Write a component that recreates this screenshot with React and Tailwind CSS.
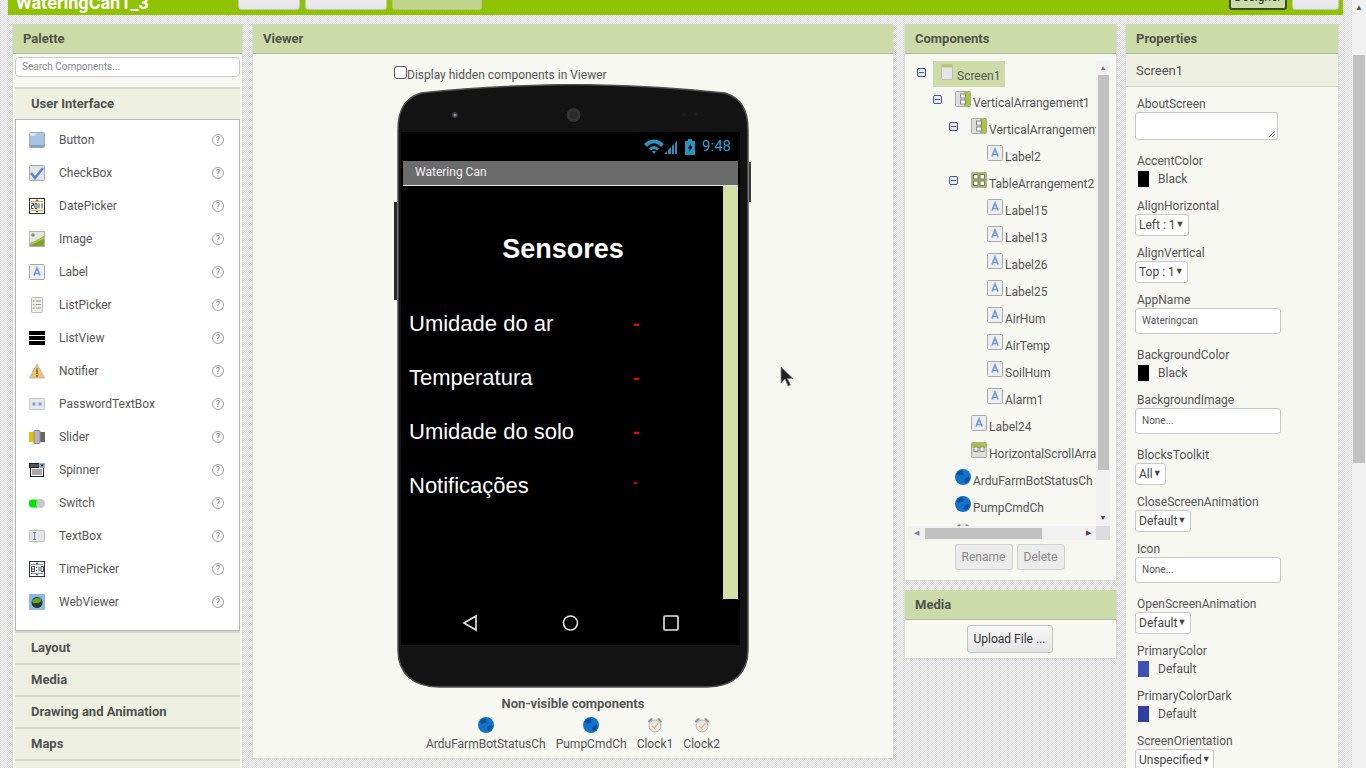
import React from "react";

const paletteItems = [
  ["Button", "button"],
  ["CheckBox", "checkbox"],
  ["DatePicker", "datepicker"],
  ["Image", "image"],
  ["Label", "label"],
  ["ListPicker", "listpicker"],
  ["ListView", "listview"],
  ["Notifier", "notifier"],
  ["PasswordTextBox", "password"],
  ["Slider", "slider"],
  ["Spinner", "spinner"],
  ["Switch", "switch"],
  ["TextBox", "textbox"],
  ["TimePicker", "timepicker"],
  ["WebViewer", "webviewer"],
];

const tree = {
  name: "Screen1", icon: "screen", selected: true, kids: [
    {
      name: "VerticalArrangement1", icon: "vertical", kids: [
        { name: "VerticalArrangement2", icon: "vertical", kids: [{ name: "Label2", icon: "label" }] },
        {
          name: "TableArrangement2", icon: "table", kids: [
            { name: "Label15", icon: "label" },
            { name: "Label13", icon: "label" },
            { name: "Label26", icon: "label" },
            { name: "Label25", icon: "label" },
            { name: "AirHum", icon: "label" },
            { name: "AirTemp", icon: "label" },
            { name: "SoilHum", icon: "label" },
            { name: "Alarm1", icon: "label" },
          ],
        },
        { name: "Label24", icon: "label" },
        { name: "HorizontalScrollArrangement1", icon: "horizontal" },
      ],
    },
    { name: "ArduFarmBotStatusCh", icon: "globe" },
    { name: "PumpCmdCh", icon: "globe" },
    { name: "Clock1", icon: "clock" },
  ],
};

// little component icons, all drawn on a 16 x 16 box
function Icon({ name }) {
  const frame = "#a9a9a9";
  return (
    <svg width="16" height="16" viewBox="0 0 16 16" className="shrink-0">
      {name === "button" && (
        <>
          <rect x="0.5" y="0.5" width="15" height="15" rx="1" fill="#a9c2e6" stroke="#a8a8a8" />
          <rect x="1" y="13" width="14" height="2" fill="#7f9fcf" />
          <path d="M1 1h8L5 4H1z" fill="#d6e3f5" />
        </>
      )}
      {name === "checkbox" && (
        <>
          <rect x="0.5" y="0.5" width="15" height="15" rx="1" fill="#e4e4e4" stroke={frame} />
          <path d="M2 8l4 5 8-10" fill="none" stroke="#4f86d6" strokeWidth="2.4" />
        </>
      )}
      {(name === "datepicker" || name === "timepicker") && (
        <>
          <rect x="0.5" y="0.5" width="15" height="15" fill="#fff" stroke="#333" />
          <path d="M2 3.5h12M2 12.5h12" stroke={name === "datepicker" ? "#f0a030" : "#6a9fd8"} />
          <path d="M8 1l-1.5 2h3zM8 15l-1.5-2h3z" fill="#555" />
          <path d={name === "datepicker" ? "M2.5 5.5h2v2h-2v3h2M6 5.5h2v5H6zM10 5.5v5M13 5.5v5" : "M2.5 5.5h3v5h-3zM2.5 8h3M7.5 6v1M7.5 9v1M10 5.5v5M12 5.5h2.5v5H12z"} fill="none" stroke="#333" strokeWidth="0.9" />
        </>
      )}
      {name === "image" && (
        <>
          <rect x="0.5" y="0.5" width="15" height="15" fill="#e4ead8" stroke="#b5b5b5" />
          <circle cx="4" cy="4" r="1.8" fill="#8a8a8a" />
          <path d="M1 12c4-1 7-3 14-7v10H1z" fill="#7ba428" />
          <path d="M1 12c4-1 7-3 14-7v3c-6 2-9 5-14 6z" fill="#a6c85a" />
        </>
      )}
      {name === "label" && (
        <>
          <rect x="0.5" y="0.5" width="15" height="15" rx="1" fill="#eeeeee" stroke={frame} />
          <path d="M5 11.5L8 4l3 7.5M6 9.5h4" fill="none" stroke="#6f9bd8" strokeWidth="1.6" />
        </>
      )}
      {name === "listpicker" && (
        <>
          <rect x="2.5" y="0.5" width="11" height="15" rx="1" fill="#eeeeee" stroke="#bbb" />
          <path d="M4 4h1.5M4 7.5h1.5M4 11h1.5" stroke="#9fbf3f" strokeWidth="1.5" />
          <path d="M7 4h5M7 7.5h5M7 11h5" stroke="#999" />
        </>
      )}
      {name === "listview" && <path d="M0 1h16v4H0zM0 6h16v4H0zM0 11h16v4H0z" fill="#000" />}
      {name === "notifier" && (
        <>
          <path d="M8 1l7.5 14H.5z" fill="#f2c26a" stroke="#b9b9b9" />
          <path d="M8 5.5v5.5M8 12v2" stroke="#8a6a30" strokeWidth="1.5" />
        </>
      )}
      {name === "password" && (
        <>
          <rect x="0.5" y="2.5" width="15" height="11" rx="1" fill="#e8e8e8" stroke="#c4c4c4" />
          <path d="M5 6v4M3.3 7l3.4 2M6.7 7L3.3 9M11 6v4M9.300 7l3.400 2M12.700 7l-3.400 2" stroke="#6f9bd8" />
        </>
      )}
      {name === "slider" && (
        <>
          <rect x="0" y="3" width="5" height="10" fill="#f5b800" />
          <rect x="10" y="3" width="6" height="10" fill="#666" />
          <rect x="5" y="1.5" width="6" height="13" rx="1" fill="#b5b5b5" stroke="#8a8a8a" />
        </>
      )}
      {name === "spinner" && (
        <>
          <rect x="1.5" y="4.5" width="13" height="10" fill="#fff" stroke="#222" />
          <rect x="0.5" y="1.5" width="15" height="4" fill="#555" stroke="#222" />
          <rect x="10" y="1" width="6" height="5" fill="#8fb2e0" />
          <path d="M11.5 2.5h3L13 5z" fill="#000" />
          <path d="M3 8h10M3 10h10M3 12h10" stroke="#555" />
        </>
      )}
      {name === "switch" && (
        <>
          <rect x="0" y="4.500" width="11" height="8" rx="3" fill="#00e800" />
          <circle cx="11.500" cy="8.500" r="4.500" fill="#c8c8c8" />
        </>
      )}
      {name === "textbox" && (
        <>
          <rect x="0.5" y="2.5" width="15" height="11" rx="1" fill="#e4e4e4" stroke="#c0c0c0" />
          <path d="M4 4.500h3M4 11.500h3M5.500 4.500v7" fill="none" stroke="#6f8fb8" />
        </>
      )}
      {name === "webviewer" && (
        <>
          <rect x="0" y="0" width="16" height="16" rx="1" fill="#8fb6e6" />
          <circle cx="8" cy="8.500" r="5.500" fill="#1f3f2a" />
          <path d="M3 7c2-3 6-4 9-2 1 2-1 4-4 4S4 10 3 7z" fill="#6aa52a" />
        </>
      )}
      {name === "screen" && (
        <>
          <rect x="2.5" y="0.5" width="11" height="15" rx="1.5" fill="#e6e6e6" stroke="#bdbdbd" />
          <rect x="3" y="1" width="10" height="2.5" fill="#b5cc5a" />
        </>
      )}
      {name === "vertical" && (
        <>
          <rect x="0.5" y="0.5" width="15" height="15" rx="1" fill="#dedede" stroke={frame} />
          <rect x="9" y="1" width="6" height="14" fill="#a8c63c" />
          <rect x="5.5" y="3" width="5" height="4" fill="#fff" stroke="#888" />
          <rect x="5.5" y="9" width="5" height="4" fill="#fff" stroke="#888" />
        </>
      )}
      {name === "table" && (
        <>
          <rect x="0.5" y="0.5" width="15" height="15" rx="1" fill="#a8c63c" stroke={frame} />
          <rect x="2.5" y="2.5" width="4.5" height="4.5" fill="#fff" stroke="#777" />
          <rect x="9" y="2.5" width="4.5" height="4.5" fill="#fff" stroke="#777" />
          <rect x="2.5" y="9" width="4.5" height="4.5" fill="#fff" stroke="#777" />
          <rect x="9" y="9" width="4.5" height="4.5" fill="#fff" stroke="#777" />
        </>
      )}
      {name === "horizontal" && (
        <>
          <rect x="0.5" y="0.5" width="15" height="15" rx="1" fill="#dedede" stroke={frame} />
          <rect x="1" y="1" width="14" height="5" fill="#a8c63c" />
          <rect x="3" y="5" width="4" height="4.5" fill="#fff" stroke="#888" />
          <rect x="9" y="5" width="4" height="4.5" fill="#fff" stroke="#888" />
        </>
      )}
      {name === "globe" && (
        <>
          <circle cx="8" cy="8" r="8" fill="#1273cc" />
          <path d="M2 4c2-2 4-3 6-3-1 2 0 3 1 4-2 2-4 0-5 2-1-1-2-2-2-3zM10 9c2-1 4-1 5 0-1 3-3 5-5 5-1-2-1-3 0-5z" fill="#0b4f96" />
        </>
      )}
      {name === "clock" && (
        <>
          <path d="M1 4l3-3 2 1-4 4zM15 4l-3-3-2 1 4 4z" fill="#8d8d8d" />
          <circle cx="8" cy="9" r="6" fill="#e8e8e8" stroke="#b8b8b8" />
          <path d="M5 9l2.5 2L11 6.5" fill="none" stroke="#f2b35c" strokeWidth="1.3" />
        </>
      )}
    </svg>
  );
}

function PanelHeader({ title }) {
  return (
    <div className="h-[30px] shrink-0 bg-[#cddba8] border-b border-[#b4b8a8] pl-[10px] text-[13px] leading-[29px] font-bold text-[#4f524c]">
      {title}
    </div>
  );
}

function Drawer({ title }) {
  return (
    <div className="h-[32px] shrink-0 bg-[#eef1e2] border-t-2 border-[#d4d6cc] pl-4 text-[13px] leading-[30px] font-bold text-[#4f524c]">
      {title}
    </div>
  );
}

function PaletteRow({ label, icon }) {
  return (
    <div className="h-[33px] flex items-center pl-[13px] pr-[15px]">
      <Icon name={icon} />
      <span className="ml-[14px] flex-1">{label}</span>
      <span className="w-3 h-3 rounded-full border border-[#a0a0a0] text-[9px] leading-[10px] text-center text-[#777]">?</span>
    </div>
  );
}

function TreeNode({ node }) {
  return (
    <div>
      <div className="flex h-[27px] items-start whitespace-nowrap">
        <div className="w-4 shrink-0 pt-[7px]">
          {node.kids && (
            <div className="w-[9px] h-[9px] rounded-[2px] border border-[#3f51b5] bg-[#e8edf7] flex items-center justify-center">
              <div className="w-[5px] h-px bg-[#3f51b5]" />
            </div>
          )}
        </div>
        <div className={node.selected ? "flex h-[26px] pl-[6px] pr-[5px] bg-[#cddba8]" : "flex h-[26px] pl-[6px] pr-[5px]"}>
          <div className="pt-[3px]"><Icon name={node.icon} /></div>
          <span className="ml-[2px] mt-[7px] leading-4">{node.name}</span>
        </div>
      </div>
      {node.kids && (
        <div className="pl-4">
          {node.kids.map((k) => <TreeNode key={k.name} node={k} />)}
        </div>
      )}
    </div>
  );
}

function Btn({ children, className = "" }) {
  return (
    <div className={"rounded-[3px] border border-[#c4c4c4] bg-gradient-to-b from-[#f8f8f8] to-[#e4e4e4] text-center text-[#333] whitespace-nowrap " + className}>
      {children}
    </div>
  );
}

function PropLabel({ children }) {
  return <div className="pt-px pl-[2px] leading-4">{children}</div>;
}

function ColorProp({ label, color, value }) {
  return (
    <div className="mb-[10px]">
      <PropLabel>{label}</PropLabel>
      <div className="mt-[2px] h-4 flex items-center pl-[3px]">
        <div className={"w-[11px] h-4 " + color} />
        <span className="ml-[9px]">{value}</span>
      </div>
    </div>
  );
}

function SelectProp({ label, value, width }) {
  return (
    <div className="mb-2">
      <PropLabel>{label}</PropLabel>
      <div className={"h-[22px] rounded-[3px] border border-[#c8c8c8] bg-white flex items-center justify-between pl-[3px] pr-[4px] whitespace-nowrap text-[#444] " + width}>
        <span>{value}</span>
        <span className="text-[9px]">▼</span>
      </div>
    </div>
  );
}

function InputProp({ label, value }) {
  return (
    <div className="mb-3">
      <PropLabel>{label}</PropLabel>
      <div className="h-[26px] w-[146px] rounded-[3px] border border-[#c8c8c8] bg-white pl-[6px] text-[10px] leading-6 text-[#555]">
        {value}
      </div>
    </div>
  );
}

function PhoneFrame() {
  return (
    <svg width="352" height="604" viewBox="0 0 352 604" className="absolute inset-0">
      <path
        d="M1 46C1 24 9 14 24 9C80 3 130 1 176 .5C222 1 272 3 328 9C343 14 351 24 351 46V566C351 590 335 603 310 603H42C17 603 1 590 1 566Z"
        fill="#131313"
        stroke="#505050"
        strokeWidth="1.5"
      />
      <circle cx="58" cy="31" r="3" fill="#3a3a44" />
      <circle cx="58" cy="31" r="1.5" fill="#8d8da6" />
      <circle cx="176.5" cy="31" r="7" fill="#333" />
      <circle cx="176.5" cy="31" r="4" fill="#2a2a2a" />
      <circle cx="287" cy="30" r="2.5" fill="#1d1d1d" />
      <circle cx="299" cy="30" r="1.5" fill="#1d1d1d" />
    </svg>
  );
}

function SensorRow({ label, small }) {
  return (
    <div className="h-[54px] flex items-center pl-[6px] text-[22px] text-white font-['Liberation_Sans',Arial,sans-serif]">
      <span className="w-[224px]">{label}</span>
      <span className={small ? "text-[13px] font-bold text-[#ff0000] -mt-1" : "text-[19px] font-bold text-[#ff0000] mt-[3px]"}>-</span>
    </div>
  );
}

function NonVisible({ label, icon }) {
  return (
    <div className="flex flex-col items-center">
      <Icon name={icon} />
      <span className="mt-[3px] leading-4">{label}</span>
    </div>
  );
}

export default function App() {
  return (
    <div className="flex w-[1366px] h-screen overflow-hidden font-[Roboto,sans-serif] text-[13px] text-[#555] bg-[repeating-conic-gradient(#dcdcdc_0_25%,#f6f6f6_0_50%)] bg-[length:2px_2px]">
      <div className="w-[1352px] shrink-0">
        {/* top bar, page is scrolled so most of it is cut off */}
        <div className="ml-2 w-[1335px] h-[15px] overflow-hidden bg-[#8fc202] flex items-end pb-[5px] text-[12px]">
          <div className="ml-2 w-[222px] text-[18px] leading-6 font-bold text-white -mb-[5px]">WateringCan1_3</div>
          <Btn className="w-[62px] h-6 shrink-0">Screen1 ▾</Btn>
          <Btn className="ml-[5px] w-[82px] h-6 shrink-0">Add Screen ...</Btn>
          <div className="ml-[5px] w-[90px] h-6 shrink-0 rounded-[3px] bg-[#c0d48c] border border-[#b4c884] text-center text-[#778] whitespace-nowrap">Remove Screen</div>
          <div className="flex-1" />
          <div className="w-[58px] h-6 shrink-0 rounded-[3px] bg-[#cddba8] border-2 border-[#3c4a20] text-center text-[#333]">Designer</div>
          <Btn className="ml-[5px] mr-1 w-[47px] h-6 shrink-0">Blocks</Btn>
        </div>

        <div className="flex items-start pl-[12px] pt-[9px]">
          {/* Palette */}
          <div className="w-[231px] h-[760px] shrink-0 bg-[#f7f8f2] border-x border-[#dcdcd6] flex flex-col">
            <PanelHeader title="Palette" />
            <div className="px-[2px] flex flex-col flex-1">
              <div className="mt-[3px] h-5 rounded-[4px] border border-[#c8c8c8] bg-white pl-[6px] text-[10px] leading-[18px] text-[#8a8a8a]">Search Components...</div>
              <div className="mt-[10px]"><Drawer title="User Interface" /></div>
              <div className="h-[512px] shrink-0 bg-white border border-[#b8b8b8] pt-[3px] text-[12px]">
                {paletteItems.map(([label, icon]) => <PaletteRow key={label} label={label} icon={icon} />)}
              </div>
              <Drawer title="Layout" />
              <Drawer title="Media" />
              <Drawer title="Drawing and Animation" />
              <Drawer title="Maps" />
              <Drawer title="Charts" />
            </div>
          </div>

          {/* Viewer */}
          <div className="ml-[9px] w-[642px] h-[735px] shrink-0 bg-[#f7f8f2] border-x border-b border-[#dcdcd6] flex flex-col relative text-[12px]">
            <PanelHeader title="Viewer" />
            <div className="h-[30px] pl-[141px] pt-[12px] flex items-start">
              <div className="w-[13px] h-[13px] rounded-[3px] border border-[#555] bg-white" />
              <span className="leading-4 mt-[1px]">Display hidden components in Viewer</span>
            </div>
            <div className="relative w-[352px] h-[604px] mx-auto">
              <div className="absolute left-[-3px] top-[118px] w-[3px] h-[98px] bg-[#2a2a2a]" />
              <div className="absolute right-[-2px] top-[78px] w-[2px] h-[40px] bg-[#3a3a3a]" />
              <PhoneFrame />
              <div className="relative ml-1 w-[339px] h-[513px] top-[48px] bg-black">
                <div className="h-[29px] flex items-center justify-end pr-[9px]">
                  <svg width="34" height="16" viewBox="0 0 34 16">
                    <path d="M0 5C6-1 14-1 20 5L17 8C12 3 8 3 3 8Z" fill="#2a93bd" />
                    <path d="M5 9.5C8 6 12 6 15 9.5L13 11.5C11 9.5 9 9.5 7 11.5Z" fill="#2a93bd" />
                    <path d="M8 12.5C9 11.5 11 11.5 12 12.5L10 15Z" fill="#2a93bd" />
                    <path d="M20 15L23 12V15ZM24 15V11L27 8V15ZM28 15V7L30 5V15ZM31 15V4L33 2V15Z" fill="#2a93bd" />
                  </svg>
                  <svg width="10" height="16" viewBox="0 0 10 16" className="ml-[7px]">
                    <rect x="3" y="0" width="4" height="2" fill="#2a93bd" />
                    <rect x="0" y="2" width="10" height="14" fill="#2a93bd" />
                    <path d="M6 4L3 9.5H5L4 13.5L7.5 7.500H5.500Z" fill="#000" />
                  </svg>
                  <span className="ml-[7px] text-[15px] text-[#2a9fd0]">9:48</span>
                </div>
                <div className="mx-[2px] h-[25px] bg-[#6b6b6b] border-b border-[#e8e8e8] pl-3 text-[12px] leading-[23px] text-[#f0f0f0]">Watering Can</div>
                <div className="ml-[2px] mr-[2px] h-[413px] flex">
                  <div className="w-[320px] shrink-0">
                    <div className="h-[110px] pt-[47px] text-center text-[27px] leading-8 font-bold text-white font-['Liberation_Sans',Arial,sans-serif]">Sensores</div>
                    <SensorRow label="Umidade do ar" />
                    <SensorRow label="Temperatura" />
                    <SensorRow label="Umidade do solo" />
                    <SensorRow label="Notificações" small />
                  </div>
                  <div className="flex-1 bg-[#d3dfa5]" />
                </div>
                <div className="h-[46px] flex items-center">
                  <svg width="339" height="46" viewBox="0 0 339 46" fill="none" stroke="#e6e6e6" strokeWidth="1.6">
                    <path d="M75 17V31L63 24Z" />
                    <circle cx="169.5" cy="24" r="7" />
                    <rect x="263" y="17" width="14" height="14" rx="1" />
                  </svg>
                </div>
              </div>
            </div>
            <div className="mt-[8px] text-center text-[13px] leading-4 font-bold">Non-visible components</div>
            <div className="mt-[5px] flex justify-center gap-[10px] text-[#555]">
              <NonVisible label="ArduFarmBotStatusCh" icon="globe" />
              <NonVisible label="PumpCmdCh" icon="globe" />
              <NonVisible label="Clock1" icon="clock" />
              <NonVisible label="Clock2" icon="clock" />
            </div>
            {/* mouse pointer in the picture */}
            <svg width="14" height="22" viewBox="0 0 14 22" className="absolute left-[527px] top-[342px]">
              <path d="M1 1V17L5 13L8 20L10.5 19L7.5 12.5H13Z" fill="#222" stroke="#888" strokeWidth="0.8" />
            </svg>
          </div>

          {/* Components and Media */}
          <div className="ml-[10px] w-[213px] shrink-0">
            <div className="h-[557px] bg-[#f7f8f2] border-x border-b border-[#dcdcd6] flex flex-col">
              <PanelHeader title="Components" />
              <div className="mt-[7px] ml-[3px] mr-[6px]">
                <div className="flex h-[465px]">
                  <div className="flex-1 min-w-0 overflow-hidden pl-[9px] text-[12px]">
                    <TreeNode node={tree} />
                  </div>
                  <div className="w-[14px] shrink-0 bg-[#f1f1f1] flex flex-col items-center">
                    <div className="h-[14px] flex items-center justify-center text-[7px] text-[#777]">▲</div>
                    <div className="w-[11px] h-[395px] bg-[#c1c1c1]" />
                    <div className="flex-1" />
                    <div className="h-[14px] mb-px flex items-center justify-center text-[7px] text-[#444]">▼</div>
                  </div>
                </div>
                <div className="flex h-[14px]">
                  <div className="flex-1 bg-[#f1f1f1] flex items-center">
                    <div className="w-[17px] text-center text-[7px] leading-none text-[#888]">◀</div>
                    <div className="w-[117px] h-[11px] bg-[#c1c1c1]" />
                    <div className="flex-1" />
                    <div className="w-[16px] text-center text-[7px] leading-none text-[#444]">▶</div>
                  </div>
                  <div className="w-[14px] bg-[#dcdcdc]" />
                </div>
              </div>
              <div className="mt-1 flex justify-center gap-1 pr-[2px]">
                <div className="w-[58px] h-[26px] rounded-[3px] border border-[#d0d0d0] bg-[#ececec] text-center text-[12px] leading-6 text-[#888]">Rename</div>
                <div className="w-[48px] h-[26px] rounded-[3px] border border-[#d0d0d0] bg-[#ececec] text-center text-[12px] leading-6 text-[#888]">Delete</div>
              </div>
            </div>
            <div className="mt-[9px] h-[69px] bg-[#f7f8f2] border-x border-b border-[#dcdcd6]">
              <PanelHeader title="Media" />
              <div className="mt-[5px] flex justify-center pr-[2px]">
                <Btn className="w-[86px] h-[28px] leading-[26px] text-[12px]">Upload File ...</Btn>
              </div>
            </div>
          </div>

          {/* Properties */}
          <div className="ml-2 w-[214px] h-[760px] shrink-0 bg-[#f7f8f2] border-x border-[#dcdcd6]">
            <PanelHeader title="Properties" />
            <div className="h-[33px] bg-[#eef1e2] border-b border-[#d6d8cc] pl-[10px] leading-[34px]">Screen1</div>
            <div className="pl-[9px] pt-[8px] text-[12px]">
              <div className="mb-3">
                <PropLabel>AboutScreen</PropLabel>
                <div className="w-[143px] h-[28px] rounded-[3px] border border-[#c8c8c8] bg-white relative">
                  <svg width="8" height="8" viewBox="0 0 8 8" className="absolute right-px bottom-px" stroke="#666" strokeWidth="0.8">
                    <path d="M1 7L7 1M4 7L7 4" />
                  </svg>
                </div>
              </div>
              <ColorProp label="AccentColor" color="bg-black" value="Black" />
              <SelectProp label="AlignHorizontal" value="Left : 1" width="w-[54px]" />
              <SelectProp label="AlignVertical" value="Top : 1" width="w-[53px]" />
              <InputProp label="AppName" value="Wateringcan" />
              <ColorProp label="BackgroundColor" color="bg-black" value="Black" />
              <InputProp label="BackgroundImage" value="None..." />
              <SelectProp label="BlocksToolkit" value="All" width="w-[31px]" />
              <SelectProp label="CloseScreenAnimation" value="Default" width="w-[56px]" />
              <InputProp label="Icon" value="None..." />
              <SelectProp label="OpenScreenAnimation" value="Default" width="w-[56px]" />
              <ColorProp label="PrimaryColor" color="bg-[#3f51b5]" value="Default" />
              <ColorProp label="PrimaryColorDark" color="bg-[#303f9f]" value="Default" />
              <SelectProp label="ScreenOrientation" value="Unspecified" width="w-[79px]" />
            </div>
          </div>
        </div>
      </div>

      {/* page scrollbar */}
      <div className="w-[14px] shrink-0 bg-[#f1f1f1] flex flex-col items-center">
        <div className="h-[55px] pt-[3px] text-[8px] leading-[10px] text-[#555]">▲</div>
        <div className="w-[12px] h-[408px] bg-[#c1c1c1]" />
      </div>
    </div>
  );
}
